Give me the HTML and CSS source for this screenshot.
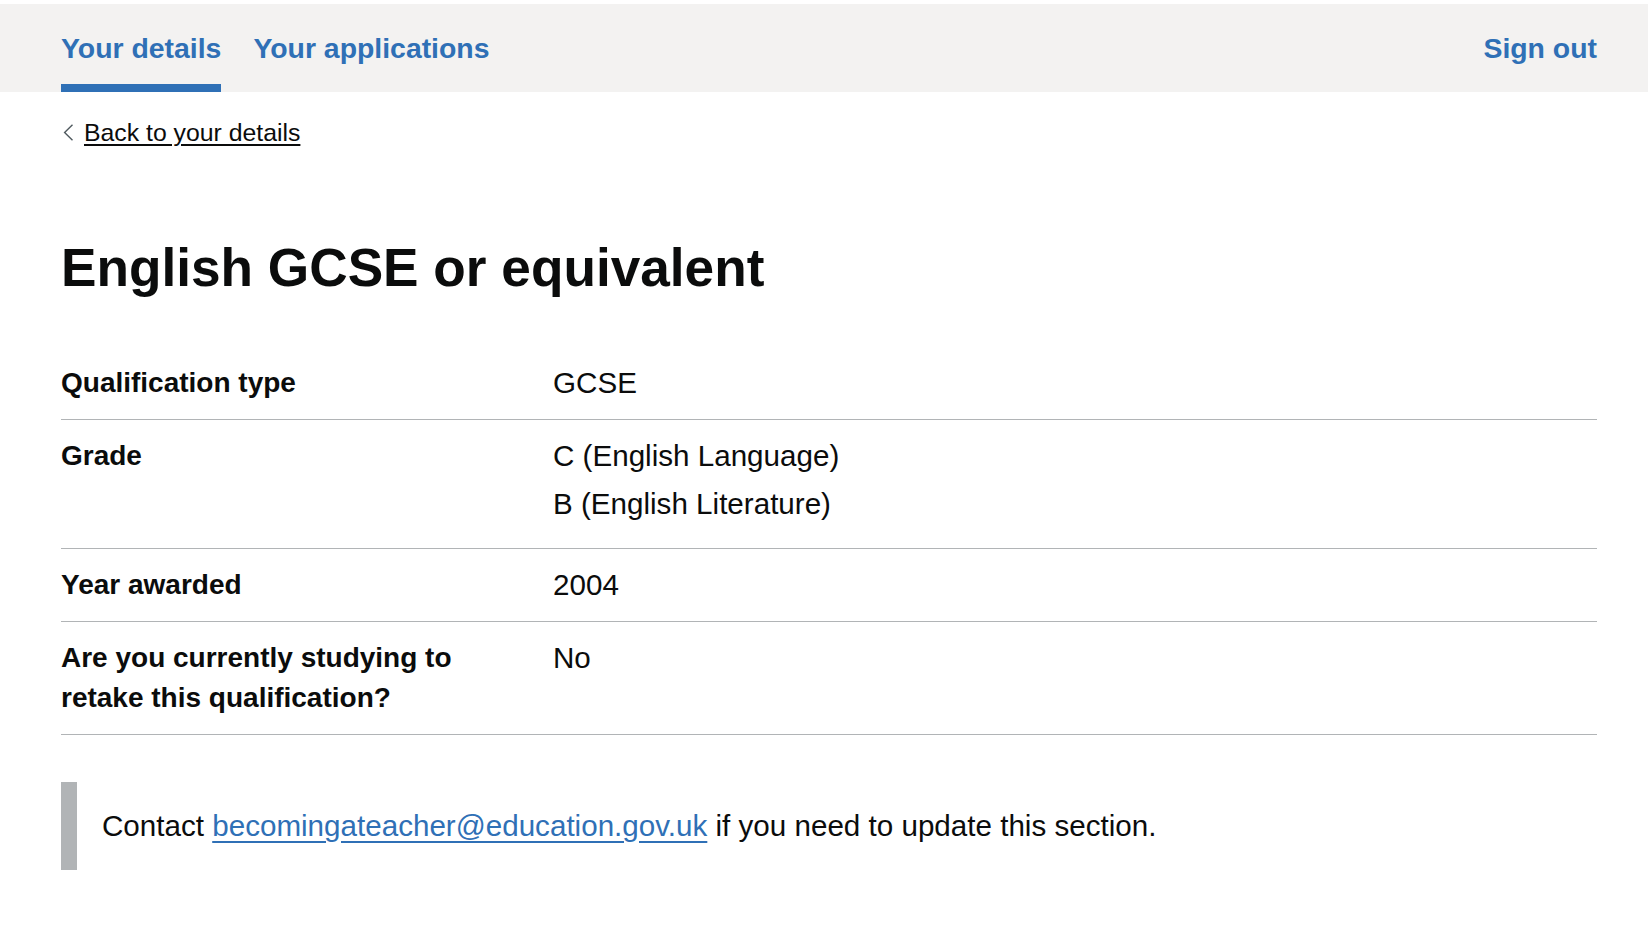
FILE: index.html
```html
<!DOCTYPE html>
<html lang="en">
<head>
<meta charset="utf-8">
<title>English GCSE or equivalent</title>
<link rel="stylesheet" href="styles.css">
</head>
<body>
<header class="service-nav">
  <div class="nav-inner">
    <ul class="nav-list">
      <li class="nav-item"><a class="nav-link nav-link--active" href="#">Your details</a></li>
      <li class="nav-item"><a class="nav-link" href="#">Your applications</a></li>
    </ul>
    <a class="nav-link" href="#">Sign out</a>
  </div>
</header>
<div class="page">
  <a class="back-link" href="#">
    <svg class="back-chevron" width="11" height="17" viewBox="0 0 11 17" aria-hidden="true"><polyline points="9.5,0.8 1.6,8.5 9.5,16.2" fill="none" stroke="#505a5f" stroke-width="1.4"/></svg>
    <span class="back-text">Back to your details</span>
  </a>
  <main>
    <h1 class="heading">English GCSE or equivalent</h1>
    <dl class="summary">
      <div class="summary-row">
        <dt class="summary-key">Qualification type</dt>
        <dd class="summary-value">GCSE</dd>
      </div>
      <div class="summary-row">
        <dt class="summary-key">Grade</dt>
        <dd class="summary-value">
          <p class="value-line">C (English Language)</p>
          <p class="value-line">B (English Literature)</p>
        </dd>
      </div>
      <div class="summary-row">
        <dt class="summary-key">Year awarded</dt>
        <dd class="summary-value">2004</dd>
      </div>
      <div class="summary-row">
        <dt class="summary-key">Are you currently studying to retake this qualification?</dt>
        <dd class="summary-value">No</dd>
      </div>
    </dl>
    <div class="inset">Contact <a class="link" href="#">becomingateacher@education.gov.uk</a> if you need to update this section.</div>
  </main>
</div>
</body>
</html>
```

FILE: styles.css
```css
* {
  box-sizing: border-box;
}

html, body {
  margin: 0;
  padding: 0;
  background: #ffffff;
}

body {
  font-family: "Liberation Sans", Arial, sans-serif;
  color: #0b0c0c;
  font-size: 29.6px;
  line-height: 40px;
}

.service-nav {
  margin-top: 4px;
  background: #f3f2f1;
}

.nav-inner {
  display: flex;
  justify-content: space-between;
  align-items: flex-start;
  padding: 0 51px 0 61px;
}

.nav-list {
  display: flex;
  gap: 32px;
  list-style: none;
  margin: 0;
  padding: 0;
}

.nav-item {
  margin: 0;
}

.nav-link {
  display: block;
  padding: 23.6px 0 16.5px;
  border-bottom: 8px solid transparent;
  font-size: 28.4px;
  font-weight: 700;
  line-height: 40px;
  color: #2f70b6;
  text-decoration: none;
}

.nav-link--active {
  border-bottom-color: #2f70b6;
}

.page {
  padding: 0 51px 0 61px;
}

.back-link {
  display: flex;
  align-items: center;
  width: fit-content;
  margin-top: 24.6px;
  font-size: 24.8px;
  line-height: 31.6px;
  color: #0b0c0c;
  text-decoration: none;
}

.back-chevron {
  display: block;
  margin: 0 10px 0 2px;
  flex: none;
}

.back-text {
  text-decoration: underline;
  text-decoration-thickness: 1.6px;
  text-underline-offset: 3px;
}

.heading {
  margin: 87.5px 0 48.5px;
  font-size: 53.2px;
  line-height: 63px;
  font-weight: 700;
}

.summary {
  margin: 0;
}

.summary-row {
  display: grid;
  grid-template-columns: 492px 1fr;
  border-bottom: 1px solid #b1b4b6;
}

.summary-key {
  margin: 0;
  padding: 16px 32px 16px 0;
  font-size: 28px;
  font-weight: 700;
}

.summary-value {
  margin: 0;
  padding: 16px 0;
}

.value-line {
  margin: 0 0 8px;
}

.inset {
  margin: 46.5px 0 48px;
  padding: 24px 0 24px 25px;
  border-left: 16px solid #b1b4b6;
}

.link {
  color: #2f70b6;
  text-decoration: underline;
  text-decoration-thickness: 1.6px;
  text-underline-offset: 5px;
}
```
